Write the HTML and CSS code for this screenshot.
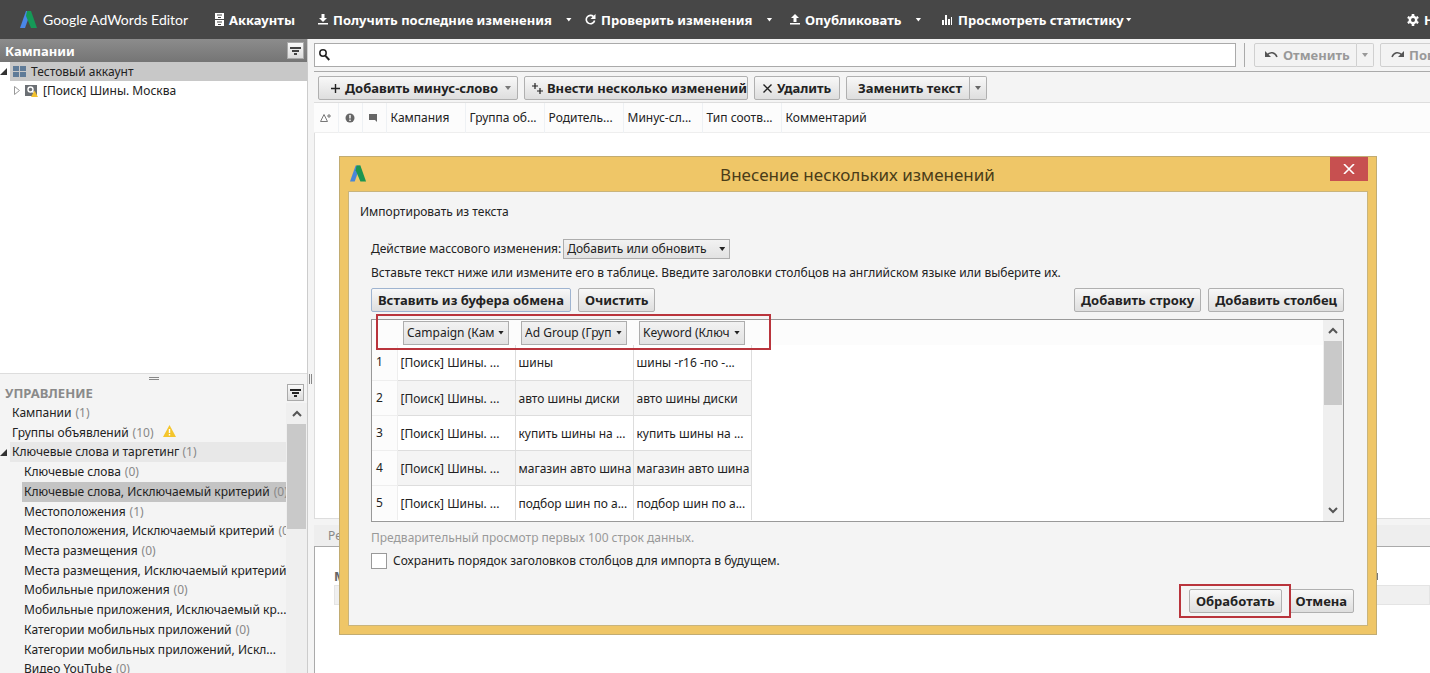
FILE: index.html
```html
<!DOCTYPE html>
<html lang="ru">
<head>
<meta charset="utf-8">
<title>Google AdWords Editor</title>
<link rel="stylesheet" href="styles.css">
</head>
<body>
<div class="app">
  <header class="topbar">
    <div class="brand">
      <svg class="brand-mark" width="18" height="17" viewBox="0 0 18 17"><path d="M6 0h5L5 17H0z" fill="#4a86e8"/><path d="M7 0h4l6 17h-6L6 5z" fill="#159957"/></svg>
      <span class="brand-name">Google AdWords Editor</span>
    </div>
    <button class="menu">
      <svg class="icon" width="9" height="13" viewBox="0 0 9 13"><path d="M0 0h9v6H0zM0 7h9v6H0z" fill="#fff"/><path d="M2 1.500h5v1H2zM2 8.500h5v1H2zM3 4h3v1H3zM3 11h3v1H3z" fill="#474747"/></svg>
      Аккаунты
    </button>
    <button class="menu">
      <svg class="icon" width="10" height="11" viewBox="0 0 10 11" fill="#fff"><path d="M3.500 0h3v4H9L5 8 1 4h2.500zM0 9h10v1.500H0z"/></svg>
      Получить последние изменения
      <span class="caret"></span>
    </button>
    <button class="menu">
      <svg class="icon" width="11" height="11" viewBox="0 0 11 11" fill="none" stroke="#fff" stroke-width="1.600"><path d="M8.500 2.600A4.200 4.200 0 1 0 9.600 6.500"/><path d="M10.500 0v5h-5z" fill="#fff" stroke="none"/></svg>
      Проверить изменения
      <span class="caret"></span>
    </button>
    <button class="menu">
      <svg class="icon" width="10" height="11" viewBox="0 0 10 11" fill="#fff"><path d="M3.500 8h3V4H9L5 0 1 4h2.500zM0 9h10v1.500H0z"/></svg>
      Опубликовать
      <span class="caret"></span>
    </button>
    <button class="menu stats">
      <svg class="icon" width="11" height="10" viewBox="0 0 11 10" fill="#fff"><path d="M0 5h2v5H0zM3 0h2v10H3zM6 4h2v6H6zM9 2h1v8H9z"/></svg>
      Просмотреть статистику
      <span class="caret"></span>
    </button>
    <button class="menu">
      <svg class="icon" width="12" height="12" viewBox="0 0 12 12" fill="none" stroke="#fff"><circle cx="6" cy="6" r="3.200" stroke-width="2.400"/><path d="M6 0v2M6 10v2M.8 3l1.700 1M9.500 8l1.700 1M.8 9l1.700-1M9.500 4l1.700-1" stroke-width="2.600"/></svg>
      Настройки
    </button>
  </header>

  <div class="workspace">
    <aside class="sidebar">
      <div class="panel-head">
        <h2 class="panel-title">Кампании</h2>
        <button class="filter" aria-label="Фильтр кампаний"><svg width="11" height="8" viewBox="0 0 11 8" fill="#444"><path d="M0 0h11v2H0zM2 3h7v2H2zM4 6h3v2H4z"/></svg></button>
      </div>
      <div class="tree">
        <div class="node">
          <svg class="twist" width="8" height="7" viewBox="0 0 8 7"><path d="M7 0v7H0z" fill="#333"/></svg>
          <div class="node-body active">
            <svg width="13" height="11" viewBox="0 0 13 11" fill="#5f7b98"><path d="M0 0h6v5H0zM7 0h6v5H7zM0 6h6v5H0zM7 6h6v5H7z"/></svg>
            Тестовый аккаунт
          </div>
        </div>
        <div class="node child">
          <svg class="twist" width="6" height="9" viewBox="0 0 6 9"><path d="M.5.5 5.500 4.500.5 8.500z" fill="#fff" stroke="#999"/></svg>
          <div class="node-body">
            <svg width="13" height="12" viewBox="0 0 13 12"><rect width="12" height="11" fill="#6b6f74"/><circle cx="5.500" cy="4.500" r="2.500" fill="none" stroke="#fff" stroke-width="1.400"/><path d="M7 6l2 2" stroke="#fff" stroke-width="1.400"/><path d="M9.500 5.500 13 12H6z" fill="#f2c12e"/></svg>
            [Поиск] Шины. Москва
          </div>
        </div>
      </div>
      <div class="split"><span class="grip"></span></div>
      <section class="manage">
        <div class="manage-head">
          <h2 class="manage-title">УПРАВЛЕНИЕ</h2>
          <button class="filter" aria-label="Фильтр разделов"><svg width="11" height="8" viewBox="0 0 11 8" fill="#222"><path d="M0 0h11v2H0zM2 3h7v2H2zM4 6h3v2H4z"/></svg></button>
        </div>
        <div class="manage-body">
          <ul class="types">
            <li class="type">Кампании <span class="count">(1)</span></li>
            <li class="type">Группы объявлений <span class="count">(10)</span> <svg class="warn" width="13" height="12" viewBox="0 0 13 12"><path d="M6.500 0 13 12H0z" fill="#f4c52c"/><path d="M6.500 4v4M6.500 9v1.500" stroke="#fff" stroke-width="1.400"/></svg></li>
            <li class="type group"><svg class="twist" width="8" height="7" viewBox="0 0 8 7"><path d="M7 0v7H0z" fill="#333"/></svg><span class="group-body">Ключевые слова и таргетинг <span class="count">(1)</span></span></li>
            <li class="type sub">Ключевые слова <span class="count">(0)</span></li>
            <li class="type sub chosen">Ключевые слова, Исключаемый критерий <span class="count">(0)</span></li>
            <li class="type sub">Местоположения <span class="count">(1)</span></li>
            <li class="type sub">Местоположения, Исключаемый критерий <span class="count">(0)</span></li>
            <li class="type sub">Места размещения <span class="count">(0)</span></li>
            <li class="type sub">Места размещения, Исключаемый критерий <span class="count">(0)</span></li>
            <li class="type sub">Мобильные приложения <span class="count">(0)</span></li>
            <li class="type sub">Мобильные приложения, Исключаемый кр...</li>
            <li class="type sub">Категории мобильных приложений <span class="count">(0)</span></li>
            <li class="type sub">Категории мобильных приложений, Искл...</li>
            <li class="type sub">Видео YouTube <span class="count">(0)</span></li>
          </ul>
          <div class="scroll">
            <svg class="scroll-arrow" width="10" height="7" viewBox="0 0 10 7" fill="none" stroke="#555" stroke-width="2"><path d="M1 6l4-4 4 4"/></svg>
            <div class="thumb side-thumb"></div>
          </div>
        </div>
      </section>
    </aside>

    <div class="gutter"><span class="grip-v"></span></div>

    <main class="main">
      <div class="search-row">
        <label class="search">
          <svg width="11" height="12" viewBox="0 0 11 12" fill="none" stroke="#222"><circle cx="4" cy="4" r="3.200" stroke-width="1.500"/><path d="M6.500 6.800 10.300 11" stroke-width="2"/></svg>
          <input class="search-input" type="text" aria-label="Поиск">
        </label>
        <span class="bar"></span>
        <div class="splitbtn muted">
          <button class="btn undo"><svg width="13" height="8" viewBox="0 0 13 8" fill="none" stroke="#555" stroke-width="1.500"><path d="M2 4C5 .5 10 1 12 6"/><path d="M0 0v6h6z" fill="#555" stroke="none"/></svg>Отменить</button>
          <button class="btn drop" aria-label="Список отмен"><span class="caret"></span></button>
        </div>
        <button class="btn muted redo"><svg width="13" height="8" viewBox="0 0 13 8" fill="none" stroke="#555" stroke-width="1.500"><path d="M11 4C8 .5 3 1 1 6"/><path d="M13 0v6H7z" fill="#555" stroke="none"/></svg>Повторить</button>
      </div>
      <div class="toolbar">
        <button class="btn add"><svg width="9" height="9" viewBox="0 0 9 9"><path d="M4.500 0v9M0 4.500h9" stroke="#222" stroke-width="1.400"/></svg>Добавить минус-слово<span class="caret"></span></button>
        <button class="btn multi"><svg width="11" height="11" viewBox="0 0 11 11"><path d="M3 0v6M0 3h6M8 5v6M5 8h6" stroke="#222" stroke-width="1.200"/></svg>Внести несколько изменений</button>
        <button class="btn remove"><svg width="9" height="9" viewBox="0 0 9 9"><path d="M.5.5l8 8M8.500.5l-8 8" stroke="#222" stroke-width="1.400"/></svg>Удалить</button>
        <div class="splitbtn">
          <button class="btn replace">Заменить текст</button>
          <button class="btn drop" aria-label="Варианты замены"><span class="caret"></span></button>
        </div>
      </div>
      <table class="grid-head">
        <tr>
          <th class="c-icon" aria-label="Изменения"><svg width="11" height="9" viewBox="0 0 11 9" fill="none" stroke="#777"><path d="M4 1.500 7.500 8.500h-7zM9 1v4M7 3h4"/></svg></th>
          <th class="c-icon" aria-label="Ошибки"><svg width="10" height="10" viewBox="0 0 10 10"><circle cx="5" cy="5" r="4.500" fill="#666"/><path d="M5 2v3.500M5 6.500V8" stroke="#fff" stroke-width="1.400"/></svg></th>
          <th class="c-icon" aria-label="Комментарии"><svg width="8" height="8" viewBox="0 0 8 8" fill="#666"><path d="M0 0h8v8L6 6H0z"/></svg></th>
          <th class="c-text">Кампания</th>
          <th class="c-text">Группа об...</th>
          <th class="c-text">Родитель...</th>
          <th class="c-text">Минус-сл...</th>
          <th class="c-text">Тип соотв...</th>
          <th class="c-last">Комментарий</th>
        </tr>
      </table>
      <div class="blank"></div>
      <section class="editor">
        <div class="tabs">Редакт.</div>
        <div class="editor-body">
          <h3 class="editor-title"><span>Минус</span><span class="editor-mark"></span></h3>
          <div class="editor-field">‹нет›</div>
        </div>
      </section>
    </main>
  </div>

  <div class="dialog" role="dialog" aria-labelledby="dlg-title">
    <div class="dlg-bar">
      <svg class="dlg-logo" width="17" height="17" viewBox="0 0 18 17"><path d="M6 0h5L5 17H0z" fill="#4a86d8"/><path d="M7 0h4l6 17h-6L6 5z" fill="#1c9550"/></svg>
      <h1 class="dlg-title" id="dlg-title">Внесение нескольких изменений</h1>
      <button class="dlg-close" aria-label="Закрыть"><svg width="12" height="10" viewBox="0 0 12 10"><path d="M1 0l10 10M11 0 1 10" stroke="#fff" stroke-width="1.600"/></svg></button>
    </div>
    <div class="dlg-body">
      <p class="dlg-lead">Импортировать из текста</p>
      <div class="form">
        <div class="action">
          <label for="mode">Действие массового изменения:</label>
          <span class="pick"><select class="select" id="mode"><option>Добавить или обновить</option></select><span class="caret"></span></span>
        </div>
        <p class="hint">Вставьте текст ниже или измените его в таблице. Введите заголовки столбцов на английском языке или выберите их.</p>
        <div class="buttons">
          <button class="btn focus">Вставить из буфера обмена</button>
          <button class="btn">Очистить</button>
          <span class="fill"></span>
          <button class="btn">Добавить строку</button>
          <button class="btn">Добавить столбец</button>
        </div>
        <div class="sheet">
          <div class="sheet-main">
            <table class="cells">
              <thead>
                <tr>
                  <td class="num"></td>
                  <th><span class="pick col"><select class="select" aria-label="Столбец 1"><option>Campaign (Кампания)</option></select><span class="caret"></span></span></th>
                  <th><span class="pick col"><select class="select" aria-label="Столбец 2"><option>Ad Group (Группа)</option></select><span class="caret"></span></span></th>
                  <th><span class="pick col"><select class="select" aria-label="Столбец 3"><option>Keyword (Ключевое слово)</option></select><span class="caret"></span></span></th>
                  <td class="rest"></td>
                </tr>
              </thead>
              <tbody>
                <tr><td class="num">1</td><td>[Поиск] Шины. ...</td><td>шины</td><td>шины -r16 -по -...</td></tr>
                <tr><td class="num">2</td><td>[Поиск] Шины. ...</td><td>авто шины диски</td><td>авто шины диски</td></tr>
                <tr><td class="num">3</td><td>[Поиск] Шины. ...</td><td>купить шины на ...</td><td>купить шины на ...</td></tr>
                <tr><td class="num">4</td><td>[Поиск] Шины. ...</td><td>магазин авто шина</td><td>магазин авто шина</td></tr>
                <tr><td class="num">5</td><td>[Поиск] Шины. ...</td><td>подбор шин по а...</td><td>подбор шин по а...</td></tr>
              </tbody>
            </table>
            <span class="mark mark-head"></span>
          </div>
          <div class="scroll wide">
            <svg class="scroll-arrow" width="10" height="7" viewBox="0 0 10 7" fill="none" stroke="#555" stroke-width="2"><path d="M1 6l4-4 4 4"/></svg>
            <div class="thumb sheet-thumb"></div>
            <span class="fill"></span>
            <svg class="scroll-arrow" width="10" height="7" viewBox="0 0 10 7" fill="none" stroke="#555" stroke-width="2"><path d="M1 1l4 4 4-4"/></svg>
          </div>
        </div>
        <p class="preview">Предварительный просмотр первых 100 строк данных.</p>
        <label class="keep"><input class="check" type="checkbox">Сохранить порядок заголовков столбцов для импорта в будущем.</label>
      </div>
      <div class="dlg-actions">
        <span class="marked"><button class="btn">Обработать</button><span class="mark mark-ok"></span></span>
        <button class="btn">Отмена</button>
      </div>
    </div>
  </div>
</div>
</body>
</html>
```
FILE: styles.css
```css
* { box-sizing: border-box; }

body {
  margin: 0;
  font-family: "Noto Sans", "Open Sans", sans-serif;
  font-size: 12px;
  line-height: 18px;
  color: #222;
  background: #f4f4f4;
}

h1, h2, h3, p, ul { margin: 0; padding: 0; }
button, input, select { font: inherit; color: inherit; }
svg { flex: none; display: block; }

.app {
  position: relative;
  display: flex;
  flex-direction: column;
  height: 100vh;
  overflow: hidden;
}

.caret {
  flex: none;
  width: 6px;
  height: 4px;
  background: currentColor;
  clip-path: polygon(0 0, 100% 0, 50% 100%);
}
.fill { flex: 1; }

/* Top bar */
.topbar {
  flex: none;
  display: grid;
  grid-template-columns: 195px 103px 267px 205px 152px 1fr 23px;
  align-items: center;
  height: 39px;
  padding-left: 20px;
  background: #474747;
  color: #fff;
}
.brand { display: flex; align-items: center; gap: 5px; }
.brand-name { font-family: Lato, sans-serif; font-size: 14px; white-space: nowrap; }
.menu {
  display: flex;
  align-items: center;
  gap: 5px;
  padding: 0;
  border: 0;
  background: none;
  font-size: 13px;
  font-weight: bold;
  white-space: nowrap;
}
.menu .caret { margin-left: 9px; }
.stats .caret { margin: 0 0 0 -3px; }

/* Sidebar */
.workspace { flex: 1; display: flex; min-height: 0; }
.sidebar {
  flex: none;
  display: flex;
  flex-direction: column;
  width: 308px;
  border-right: 1px solid #ccc;
}
.panel-head {
  display: flex;
  align-items: center;
  justify-content: space-between;
  height: 23px;
  padding: 0 3px 0 5px;
  background: linear-gradient(#8c8c8c, #757575);
}
.panel-title, .manage-title {
  font-size: 13px;
  font-weight: bold;
  color: #fff;
}
.filter {
  display: flex;
  align-items: center;
  justify-content: center;
  width: 17px;
  height: 17px;
  padding: 0;
  border: 1px solid #aaa;
  background: linear-gradient(#fafafa, #dcdcdc);
}
.tree { flex: 1; background: #fff; }
.node { display: flex; align-items: center; gap: 2px; line-height: 19px; }
.child { padding-left: 14px; gap: 5px; }
.node-body { flex: 1; display: flex; align-items: center; gap: 5px; padding-left: 3px; }
.child .node-body { padding-left: 0; }
.active { background: #c8c8c8; }
.split {
  display: flex;
  justify-content: center;
  align-items: center;
  height: 9px;
  border-top: 1px solid #ddd;
}
.grip { width: 10px; height: 3px; border: solid #888; border-width: 1px 0; }
.manage { flex: none; height: 291px; display: flex; flex-direction: column; }
.manage-head {
  flex: none;
  display: flex;
  align-items: center;
  justify-content: space-between;
  height: 21px;
  padding: 0 3px 0 5px;
}
.manage-title { color: #8a8a8a; }
.manage-body { flex: 1; min-height: 0; display: flex; }
.types {
  flex: 1;
  min-width: 0;
  display: grid;
  grid-auto-rows: 1fr;
  height: 276px;
  list-style: none;
}
.type { display: flex; gap: 4px; min-height: 0; padding-left: 12px; line-height: 20px; white-space: nowrap; overflow: hidden; }
.types .sub { padding-left: 24px; }
.types .group { align-items: center; gap: 2px; padding-left: 0; }
.group-body { flex: 1; padding-left: 2px; background: #e8e8e8; }
.chosen { background: linear-gradient(to right, transparent 22px, #c4c4c4 22px); }
.count { color: #888; }
.warn { margin: 2px 0 0 5px; }

.scroll {
  flex: none;
  display: flex;
  flex-direction: column;
  align-items: stretch;
  width: 21px;
  background: #efefef;
}
.scroll-arrow { align-self: center; margin: 7px 0; }
.thumb { margin: 0 1px; background: #c9c9c9; }
.side-thumb { height: 105px; }

.gutter { flex: none; display: flex; align-items: center; width: 6px; padding: 46px 0 0 1px; }
.grip-v { width: 3px; height: 10px; border: solid #888; border-width: 0 1px; }

/* Main area */
.main { flex: 1; min-width: 0; display: flex; flex-direction: column; overflow: hidden; }
.search-row {
  flex: none;
  display: flex;
  height: 33px;
  padding: 4px 0;
  border-bottom: 1px solid #aaa;
}
.search {
  flex: none;
  display: flex;
  align-items: center;
  width: calc(100% - 194px);
  padding-left: 4px;
  border: 1px solid #aaa;
  background: #fff;
}
.search-input { flex: 1; border: 0; outline: 0; background: none; }
.bar { flex: none; width: 1px; margin: 0 9px 0 8px; background: #aaa; }
.btn {
  flex: none;
  display: flex;
  align-items: center;
  gap: 5px;
  height: 24px;
  padding: 0 6px;
  border: 1px solid #b0b0b0;
  border-radius: 2px;
  background: linear-gradient(#f8f8f8, #dedede);
  font-size: 13px;
  font-weight: bold;
  white-space: nowrap;
}
.splitbtn { flex: none; display: flex; }
.splitbtn .btn { border-radius: 2px 0 0 2px; }
.splitbtn .drop { width: 17px; padding: 0 5px; border-left: 0; border-radius: 0 2px 2px 0; color: #666; }
.muted, .muted .btn { color: #999; border-color: #d0d0d0; }
.muted .btn, .redo { background: #f3f3f3; }
.splitbtn .undo { width: 103px; padding: 0 0 0 10px; }
.redo { margin-left: 6px; padding: 0 10px; }
.toolbar { flex: none; display: flex; gap: 6px; height: 31px; padding: 4px; border-bottom: 1px solid #ddd; }
.add { width: 200px; padding-left: 12px; }
.add .caret { margin-left: auto; color: #777; }
.multi { width: 224px; padding: 0 0 0 7px; gap: 4px; }
.remove { width: 86px; padding-left: 8px; }
.replace { width: 124px; padding-left: 11px; }

.grid-head { flex: none; width: 100%; table-layout: fixed; border-collapse: collapse; background: #fcfcfc; border-bottom: 1px solid #eee; }
.grid-head th {
  height: 29px;
  padding: 1px 0 0 4px;
  border-right: 1px solid #eef1f4;
  font-weight: normal;
  text-align: left;
  white-space: nowrap;
}
.grid-head .c-icon { width: 24px; padding-left: 6px; }
.grid-head .c-text { width: 79px; }
.grid-head .c-last { border-right: 0; }
.blank { flex: 1; background: #fff; border: 1px solid #ddd; border-width: 0 0 1px 1px; }
.editor { flex: none; height: 154px; display: flex; flex-direction: column; padding-top: 6px; }
.tabs { height: 22px; padding-left: 14px; line-height: 22px; color: #888; background: #eee; border-bottom: 1px solid #aaa; }
.editor-body { flex: 1; padding: 20px 0 0 19px; background: #fff; border-left: 1px solid #aaa; }
.editor-title { display: flex; justify-content: space-between; align-items: center; width: calc(100% - 52px); font-size: 13px; color: #666; }
.editor-mark { width: 3px; height: 7px; background: #777; }
.editor-field { height: 20px; padding-left: 4px; color: #999; background: #f0f0f0; border: 1px solid #e4e4e4; }

/* Dialog window */
.dialog {
  position: absolute;
  left: 339px;
  top: 156px;
  right: 53px;
  display: flex;
  flex-direction: column;
  padding: 0 8px 8px;
  border: 1px solid #c2ac72;
  background: #efc667;
}
.dlg-bar { display: flex; height: 34px; padding-left: 2px; }
.dlg-logo { margin-top: 8px; }
.dlg-title { flex: 1; padding-left: 18px; font-size: 17px; font-weight: normal; line-height: 36px; text-align: center; color: #4a3c18; }
.dlg-close {
  display: flex;
  align-items: center;
  justify-content: center;
  width: 38px;
  height: 24px;
  padding: 0;
  border: 0;
  background: #c75050;
}
.dlg-body { padding: 11px 13px 12px 11px; border: 1px solid #c9b47c; background: #f4f4f4; }
.form { padding: 18px 10px 0 11px; }
.action { display: flex; align-items: center; gap: 2px; }
.pick { position: relative; display: block; width: 167px; }
.pick .caret { position: absolute; right: 5px; top: 8px; }
.select {
  appearance: none;
  display: block;
  width: 100%;
  height: 20px;
  margin: 0;
  padding: 0 14px 0 3px;
  border: 1px solid #adadad;
  border-radius: 0;
  background: linear-gradient(#f2f2f2, #e2e2e2);
  line-height: 18px;
}
.hint { margin-top: 5px; white-space: nowrap; }
.buttons { display: flex; gap: 7px; margin-top: 6px; }
.focus { border-color: #9fb4d0; }
.sheet { display: flex; height: 203px; margin-top: 7px; border: 1px solid #999; background: #fff; }
.sheet-main { position: relative; flex: 1; }
.cells { width: 100%; table-layout: fixed; border-collapse: collapse; }
.cells thead { background: #fcfcfc; }
.cells th, .cells thead td { height: 25px; padding: 0 6px; border: 0; font-weight: normal; }
.cells .num { width: 25px; padding: 0 0 0 4px; border-color: #eee; background: #fcfcfc; }
.cells th { width: 118px; }
.cells td { height: 35px; padding: 2px 0 0 3px; border: 1px solid #ddd; border-width: 0 1px 1px 0; white-space: nowrap; }
.cells thead td { height: 25px; border: 0; }
.cells tbody tr:nth-child(even) td:not(.num) { background: #f4f4f4; }
.cells tbody tr:last-child td { border-bottom: 0; }
.pick.col { width: 106px; }
.col .select { height: 24px; }
.col .caret { top: 10px; }
.wide { width: 20px; }
.sheet-thumb { height: 64px; }
.preview { margin-top: 7px; color: #999; }
.keep { display: flex; align-items: center; gap: 6px; margin-top: 5px; }
.check { appearance: none; flex: none; width: 16px; height: 16px; margin: 0; border: 1px solid #999; background: #fff; }
.dlg-actions { display: flex; justify-content: flex-end; gap: 7px; margin-top: 19px; }
.marked { position: relative; }

/* Highlight frames */
.mark { position: absolute; border: 2px solid #b9343c; pointer-events: none; }
.mark-head { left: 4px; top: -6px; width: 395px; height: 36px; }
.mark-ok { inset: -5px -9px -5px -10px; }
```
